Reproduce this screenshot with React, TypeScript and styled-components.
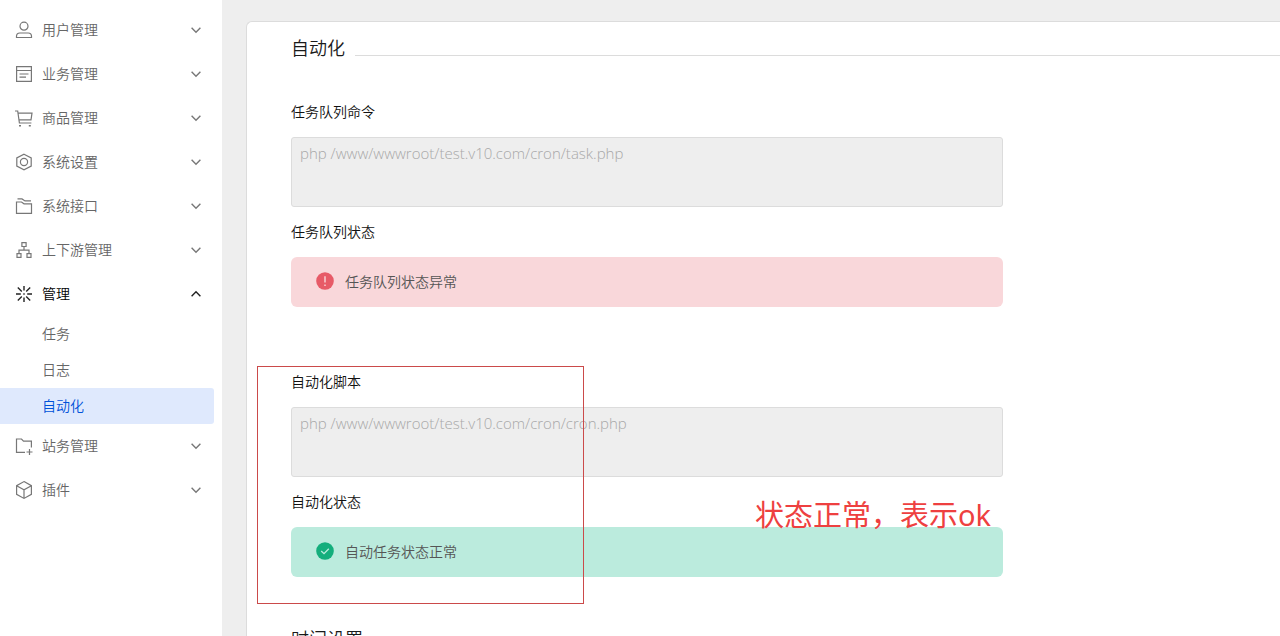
import React, { useState } from "react";
import styled, { createGlobalStyle } from "styled-components";

const GlobalStyle = createGlobalStyle`
  *, *::before, *::after { box-sizing: border-box; }
  body {
    margin: 0;
    background: #eeeeee;
    color: #1a1a1a;
    font-family: "Noto Sans", "Noto Sans CJK SC", sans-serif;
    font-size: 14px;
    font-weight: 350;
    line-height: 20px;
  }
  button, textarea { font: inherit; }
`;

const Shell = styled.div`
  display: flex;
  height: 100vh;
  overflow: hidden;
`;

const Sidebar = styled.nav`
  flex: 0 0 222px;
  padding: 8px 8px 8px 0;
  background: #ffffff;
`;

const Menu = styled.ul`
  margin: 0;
  padding: 0;
  list-style: none;
`;

const MenuButton = styled.button<{ $open: boolean }>`
  display: flex;
  align-items: center;
  gap: 8px;
  width: 100%;
  height: 44px;
  padding: 0 12px 0 14px;
  border: 0;
  background: none;
  color: ${(p) => (p.$open ? "#000000" : "#666666")};
  text-align: left;
  cursor: pointer;

  svg {
    color: ${(p) => (p.$open ? "#222222" : "#777777")};
  }
`;

const MenuText = styled.span`
  flex: 1;
`;

const SubLink = styled.a<{ $active?: boolean }>`
  display: block;
  padding: 8px 0 8px 42px;
  border-radius: 0 3px 3px 0;
  background: ${(p) => (p.$active ? "#dfe9fd" : "transparent")};
  color: ${(p) => (p.$active ? "#0052d9" : "#666666")};
  text-decoration: none;
`;

const Main = styled.main`
  flex: 1;
  min-width: 0;
  padding: 21px 0 0 24px;
  overflow: hidden;
`;

const Card = styled.section`
  min-height: 100%;
  padding: 14px 0 40px 44px;
  border: 1px solid #dcdcdc;
  border-right: 0;
  border-radius: 6px 0 0 0;
  background: #ffffff;
`;

const TitleRow = styled.div`
  display: flex;
  align-items: center;
  gap: 10px;

  &::after {
    content: "";
    flex: 1;
    height: 1px;
    margin-top: 14px;
    background: #dcdcdc;
  }
`;

const Title = styled.h2`
  margin: 0;
  font-size: 18px;
  line-height: 24px;
  font-weight: 350;
`;

const Form = styled.div`
  display: flex;
  flex-direction: column;
  gap: 65px;
  max-width: 712px;
  padding: 42px 0 50px;
`;

const Group = styled.div`
  position: relative;
  display: flex;
  flex-direction: column;
  gap: 15px;
`;

const Label = styled.label`
  color: #111111;
`;

const GroupHeading = styled.div`
  color: #111111;
`;

const Command = styled.textarea`
  display: block;
  width: 100%;
  height: 70px;
  padding: 5px 8px;
  border: 1px solid #dcdcdc;
  border-radius: 3px;
  outline: 0;
  background: #eeeeee;
  color: #a8a8a8;
  font-family: "Open Sans", "Noto Sans CJK SC", sans-serif;
  font-size: 15px;
  font-weight: 330;
  resize: none;
`;

const Status = styled.div<{ $tone: "error" | "success" }>`
  display: flex;
  align-items: center;
  gap: 10px;
  height: 50px;
  padding: 0 24px;
  border-radius: 6px;
  background: ${(p) => (p.$tone === "error" ? "#f9d7da" : "#bbebdd")};
  color: #555555;
`;

const Highlight = styled.div`
  position: absolute;
  top: -6px;
  left: -34px;
  width: 327px;
  height: 238px;
  border: 1px solid #cb4a4a;
  pointer-events: none;
`;

const Note = styled.div`
  position: absolute;
  right: 12px;
  bottom: 42px;
  color: #ee4040;
  font-size: 29px;
  font-weight: 400;
  line-height: 40px;
  white-space: nowrap;
`;

const Icon = ({ children }: { children: React.ReactNode }) => (
  <svg width="20" height="20" viewBox="0 0 20 20" fill="none" stroke="currentColor" strokeWidth="1.2" aria-hidden="true">
    {children}
  </svg>
);

const icons = {
  user: (
    <Icon>
      <circle cx="10" cy="6.2" r="4" />
      <path d="M2.500 17.500v-1.200c0-2 1.300-3.300 3.300-3.300h8.400c2 0 3.300 1.300 3.300 3.300v1.200z" />
    </Icon>
  ),
  business: (
    <Icon>
      <path d="M2.600 2.600h14.800v14.800H2.600zM2.600 6.500h14.800M5.500 10h9M5.500 13.200h6.500" />
    </Icon>
  ),
  cart: (
    <Icon>
      <path d="M1 3h2.700l1.700 12h12M4 5.200h14l-1 6.600H5" />
      <path d="M5 17.700h2M14.800 17.700h2" strokeWidth="1.600" />
    </Icon>
  ),
  settings: (
    <Icon>
      <path d="M10 2.200l7.200 3.700v8.200L10 17.800l-7.200-3.700V5.900z" />
      <circle cx="10" cy="10" r="3.600" />
    </Icon>
  ),
  folders: (
    <Icon>
      <path d="M2.500 6h5l2.500 1.800h7.500v9.600h-15zM3.500 2.900H8l3 2h6" />
    </Icon>
  ),
  tree: (
    <Icon>
      <path d="M7.900 2.600h4.200v3.900H7.900zM3 13.600h4v3.800H3zM13 13.600h4v3.800h-4zM10 6.500v3.700M5 13.600v-3.400h10v3.400" />
    </Icon>
  ),
  burst: (
    <Icon>
      <path d="M10 2v4.500M10 13.500V18M2 10h4.800M13.200 10H18M3.800 3.600l4 3.800M16.200 3.600l-4 3.800M3.800 16.400l4-3.800M16.200 16.400l-4-3.800" strokeWidth="1.400" />
      <circle cx="10" cy="10" r="0.700" strokeWidth="0.600" />
    </Icon>
  ),
  folderPlus: (
    <Icon>
      <path d="M11 16.400H2.500V3h5l2 2.200h7.900v6.300M15.500 13v6M12.500 16h6" />
    </Icon>
  ),
  box: (
    <Icon>
      <path d="M10 1.600l7.400 4.100v8.600L10 18.400l-7.400-4.100V5.700zM2.600 5.700l7.400 4 7.400-4M10 9.700v8.700" />
    </Icon>
  ),
};

const Chevron = ({ up }: { up: boolean }) => (
  <svg width="12" height="12" viewBox="0 0 12 12" fill="none" stroke="currentColor" strokeWidth="1.400" aria-hidden="true">
    <path d={up ? "M1.600 8.200L6 3.800l4.400 4.400" : "M1.600 3.800L6 8.200l4.400-4.400"} />
  </svg>
);

const ErrorIcon = () => (
  <svg width="20" height="20" viewBox="0 0 20 20" aria-hidden="true">
    <circle cx="10" cy="9" r="8.800" fill="#e75a67" />
    <path d="M10 4.200v6.300M10 12.500v1.500" stroke="#f9d7da" strokeWidth="1.400" />
  </svg>
);

const SuccessIcon = () => (
  <svg width="20" height="20" viewBox="0 0 20 20" aria-hidden="true">
    <circle cx="10" cy="9" r="8.800" fill="#14ae7c" />
    <path d="M6.200 9l2.800 2.700 4.800-4.900" fill="none" stroke="#bbebdd" strokeWidth="1.300" />
  </svg>
);

type MenuItem = { text: string; icon: React.ReactNode; children?: string[] };

const menu: MenuItem[] = [
  { text: "用户管理", icon: icons.user },
  { text: "业务管理", icon: icons.business },
  { text: "商品管理", icon: icons.cart },
  { text: "系统设置", icon: icons.settings },
  { text: "系统接口", icon: icons.folders },
  { text: "上下游管理", icon: icons.tree },
  { text: "管理", icon: icons.burst, children: ["任务", "日志", "自动化"] },
  { text: "站务管理", icon: icons.folderPlus },
  { text: "插件", icon: icons.box },
];

export default function App() {
  const [open, setOpen] = useState("管理");

  return (
    <>
      <GlobalStyle />
      <Shell>
        <Sidebar>
          <Menu>
            {menu.map((item) => {
              const isOpen = item.text === open;
              return (
                <li key={item.text}>
                  <MenuButton
                    type="button"
                    $open={isOpen}
                    aria-expanded={isOpen}
                    onClick={() => setOpen(isOpen ? "" : item.text)}
                  >
                    {item.icon}
                    <MenuText>{item.text}</MenuText>
                    <Chevron up={isOpen} />
                  </MenuButton>
                  {isOpen && item.children && (
                    <Menu>
                      {item.children.map((child) => (
                        <li key={child}>
                          <SubLink href="#" $active={child === "自动化"}>
                            {child}
                          </SubLink>
                        </li>
                      ))}
                    </Menu>
                  )}
                </li>
              );
            })}
          </Menu>
        </Sidebar>
        <Main>
          <Card>
            <TitleRow>
              <Title>自动化</Title>
            </TitleRow>
            <Form>
              <Group>
                <Label htmlFor="task-command">任务队列命令</Label>
                <Command id="task-command" readOnly value="php /www/wwwroot/test.v10.com/cron/task.php" />
                <GroupHeading>任务队列状态</GroupHeading>
                <Status $tone="error" role="status">
                  <ErrorIcon />
                  任务队列状态异常
                </Status>
              </Group>
              <Group>
                <Label htmlFor="cron-command">自动化脚本</Label>
                <Command id="cron-command" readOnly value="php /www/wwwroot/test.v10.com/cron/cron.php" />
                <GroupHeading>自动化状态</GroupHeading>
                <Status $tone="success" role="status">
                  <SuccessIcon />
                  自动任务状态正常
                </Status>
                <Highlight />
                <Note>状态正常，表示ok</Note>
              </Group>
            </Form>
            <TitleRow>
              <Title>时间设置</Title>
            </TitleRow>
          </Card>
        </Main>
      </Shell>
    </>
  );
}
